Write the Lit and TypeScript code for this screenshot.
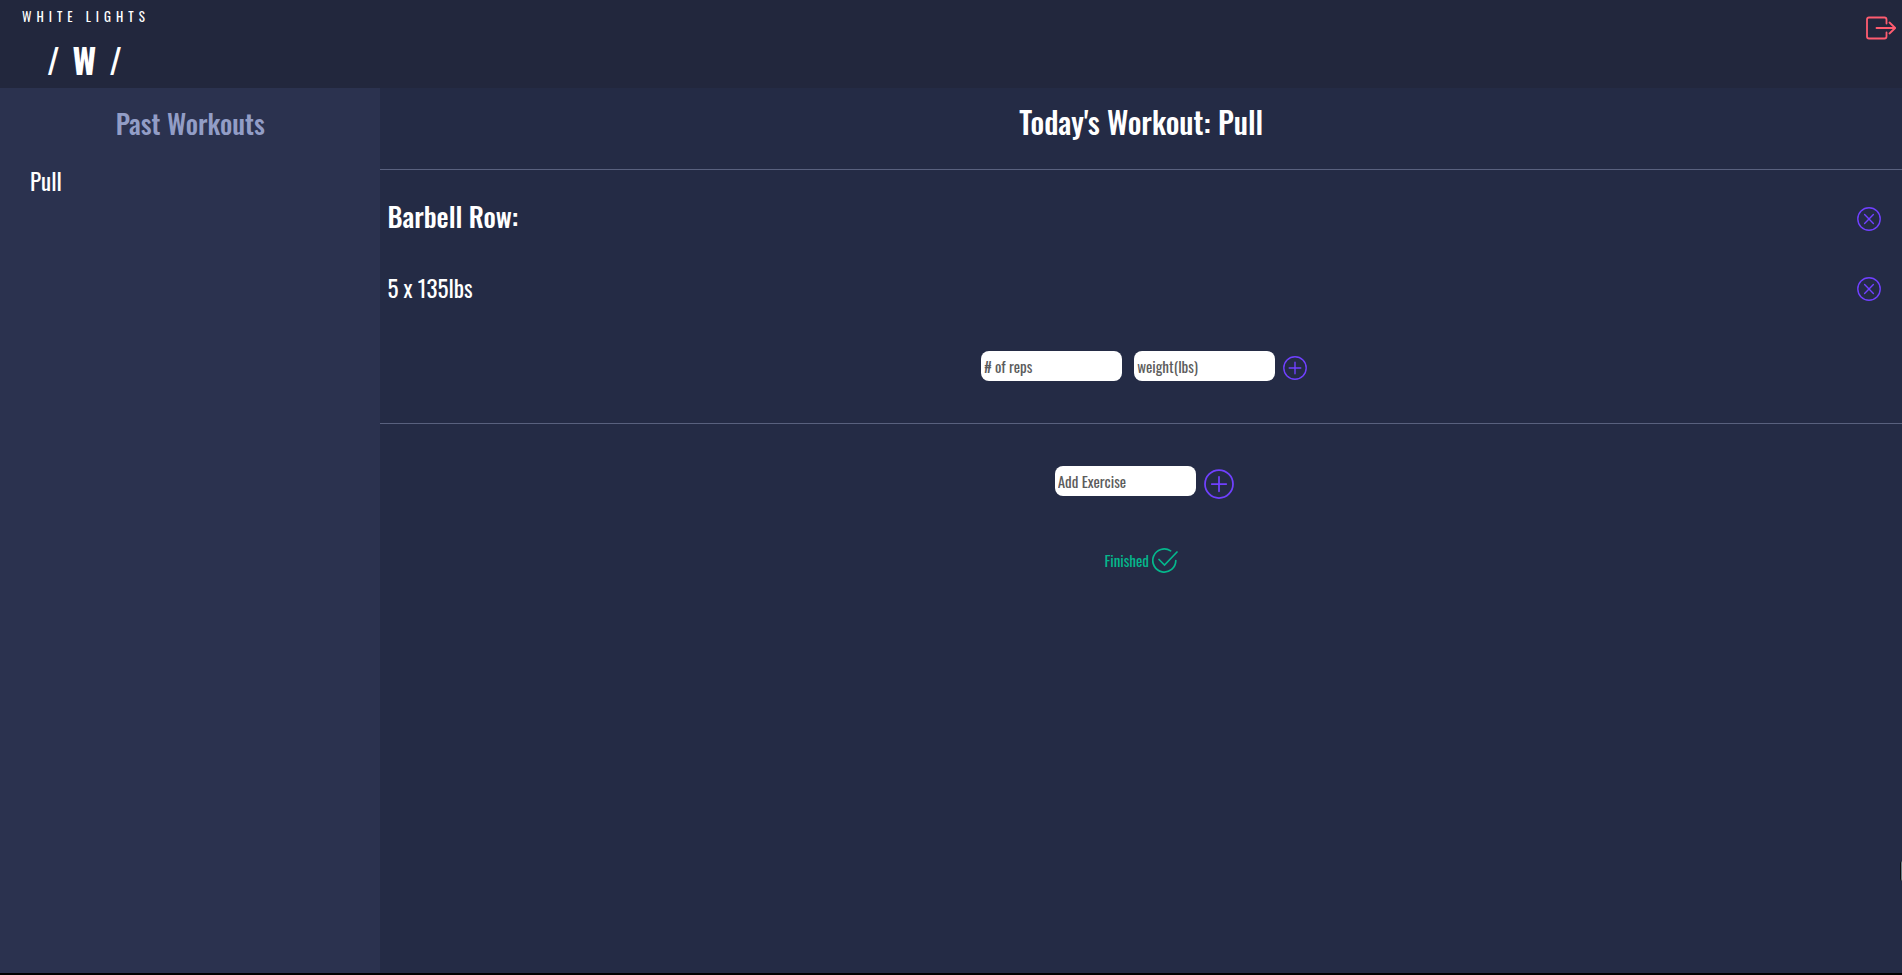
import { LitElement, html, css, svg } from "lit";
import { customElement, property, state } from "lit/decorators.js";

interface WorkoutSet {
  reps: string;
  weight: string;
}

interface Exercise {
  name: string;
  sets: WorkoutSet[];
}

@customElement("round-icon")
class RoundIcon extends LitElement {
  @property() kind = "add";

  static styles = css`
    :host {
      display: block;
    }
    svg {
      display: block;
      width: 100%;
      height: 100%;
      fill: none;
      stroke: currentColor;
      stroke-linecap: round;
      stroke-width: 1.4;
    }
  `;

  render() {
    return html`<svg viewBox="0 0 24 24" aria-hidden="true">
      <circle cx="12" cy="12" r="11.2"></circle>
      ${this.kind === "add"
        ? svg`<path d="M12 6.2v11.6M6.2 12h11.6"></path>`
        : svg`<path d="M7.6 7.6l8.8 8.8M16.4 7.6l-8.8 8.8"></path>`}
    </svg>`;
  }
}

@customElement("app-root")
class AppRoot extends LitElement {
  @state() private past = ["Pull"];
  @state() private exercises: Exercise[] = [
    { name: "Barbell Row", sets: [{ reps: "5", weight: "135" }] },
  ];

  static styles = css`
    :host {
      display: flex;
      flex-direction: column;
      box-sizing: border-box;
      min-height: 100vh;
      border-bottom: 2px solid #000;
      background: #242b45;
      color: #fff;
      font-family: Oswald, "Liberation Sans Narrow", "Liberation Sans", sans-serif;
      font-size: 15px;
      overflow: hidden;
    }
    * {
      box-sizing: border-box;
    }
    h1,
    h2,
    h3,
    p,
    ul {
      margin: 0;
      padding: 0;
    }
    button {
      border: 0;
      padding: 0;
      background: none;
      font: inherit;
      cursor: pointer;
    }
    .top {
      display: flex;
      justify-content: space-between;
      align-items: flex-start;
      height: 88px;
      padding: 4px 6px 0 22px;
      background: #22273d;
    }
    .name {
      font-size: 13px;
      line-height: 24px;
      letter-spacing: 5px;
    }
    .logo {
      display: flex;
      gap: 13px;
      padding: 10px 0 0 25px;
      font-size: 34px;
      line-height: 44px;
    }
    .logout {
      color: #ff5c70;
      margin-top: 12px;
    }
    .logout svg {
      display: block;
      width: 30px;
      height: 24px;
      fill: none;
      stroke: currentColor;
      stroke-width: 1.8;
      stroke-linecap: round;
      stroke-linejoin: round;
    }
    .body {
      flex: 1;
      display: grid;
      grid-template-columns: 20% 1fr;
    }
    .past {
      padding-top: 15px;
      background: #2b324f;
    }
    .past h2 {
      color: #929dc6;
      font-size: 27px;
      font-weight: 500;
      line-height: 40px;
      text-align: center;
    }
    .past ul {
      padding: 20px 30px;
      list-style: none;
      font-size: 23px;
      line-height: 36px;
    }
    .past a {
      color: inherit;
      text-decoration: none;
    }
    .today h1 {
      padding: 14px 0 27px;
      font-size: 30px;
      font-weight: 500;
      line-height: 40px;
      text-align: center;
    }
    .exercise {
      padding: 14px 0 42px;
      border: solid #59617e;
      border-width: 1px 0;
    }
    .row {
      display: flex;
      justify-content: space-between;
      align-items: center;
      height: 70px;
      padding: 0 21px 0 7px;
    }
    .row h3 {
      padding-bottom: 6px;
      font-size: 27px;
      font-weight: 500;
    }
    .row p {
      padding-bottom: 2px;
      font-size: 23px;
    }
    .row button {
      color: #7040ff;
    }
    .small {
      width: 24px;
      height: 24px;
    }
    .large {
      width: 30px;
      height: 30px;
    }
    form {
      display: flex;
      justify-content: center;
      align-items: center;
      padding-left: 6px;
    }
    .set {
      padding-top: 27px;
      gap: 12px;
    }
    .add {
      padding-top: 39px;
      gap: 8px;
    }
    .pair {
      display: flex;
      align-items: center;
      gap: 8px;
    }
    form button {
      color: #7040ff;
      margin-top: 4px;
    }
    .add button {
      margin-top: 6px;
    }
    input {
      width: 141px;
      height: 30px;
      padding: 0 3px;
      border: 0;
      border-radius: 8px;
      background: #fff;
      color: #222;
      font: inherit;
    }
    input::placeholder {
      color: #5c5c5c;
      opacity: 1;
    }
    .finish {
      display: flex;
      justify-content: center;
      padding-top: 47px;
    }
    .finish button {
      display: flex;
      align-items: center;
      gap: 3px;
      color: #05b78c;
    }
    .finish svg {
      width: 26px;
      height: 28px;
      padding-top: 2px;
      fill: none;
      stroke: currentColor;
      stroke-width: 1.7;
      stroke-linecap: round;
    }
    .help {
      position: absolute;
      right: 0;
      top: 861px;
      width: 2px;
      height: 20px;
      border-radius: 2px 0 0 2px;
      border-left: 1px solid #0b0d10;
      background: #6d7f86;
    }
  `;

  private removeExercise(i: number) {
    this.exercises = this.exercises.filter((_, n) => n !== i);
  }

  private removeSet(i: number, j: number) {
    this.exercises = this.exercises.map((e, n) =>
      n === i ? { ...e, sets: e.sets.filter((_, m) => m !== j) } : e
    );
  }

  private addSet(i: number, event: SubmitEvent) {
    event.preventDefault();
    const data = new FormData(event.target as HTMLFormElement);
    const set = { reps: String(data.get("reps")), weight: String(data.get("weight")) };
    this.exercises = this.exercises.map((e, n) =>
      n === i ? { ...e, sets: [...e.sets, set] } : e
    );
  }

  private addExercise(event: SubmitEvent) {
    event.preventDefault();
    const data = new FormData(event.target as HTMLFormElement);
    this.exercises = [...this.exercises, { name: String(data.get("exercise")), sets: [] }];
  }

  render() {
    return html`
      <header class="top">
        <div>
          <div class="name">WHITE LIGHTS</div>
          <div class="logo"><span>/</span><b>W</b><span>/</span></div>
        </div>
        <button class="logout" aria-label="Log out">
          <svg viewBox="0 0 30 24">
            <path d="M20.500 7.500V3.500Q20.500 1.500 18.500 1.500H3Q1 1.500 1 3.500v17Q1 22.500 3 22.500h15.500Q20.500 22.500 20.500 20.500V16.500"></path>
            <path d="M10.500 12H29.200M23.500 6.500L29.200 12l-5.700 5.500"></path>
          </svg>
        </button>
      </header>
      <div class="body">
        <aside class="past">
          <h2>Past Workouts</h2>
          <ul>
            ${this.past.map((w) => html`<li><a href="#">${w}</a></li>`)}
          </ul>
        </aside>
        <main class="today">
          <h1>Today's Workout: Pull</h1>
          ${this.exercises.map(
            (e, i) => html`<section class="exercise">
              <div class="row">
                <h3>${e.name}:</h3>
                <button aria-label="Remove exercise" @click=${() => this.removeExercise(i)}>
                  <round-icon class="small" kind="remove"></round-icon>
                </button>
              </div>
              ${e.sets.map(
                (s, j) => html`<div class="row">
                  <p>${s.reps} x ${s.weight}lbs</p>
                  <button aria-label="Remove set" @click=${() => this.removeSet(i, j)}>
                    <round-icon class="small" kind="remove"></round-icon>
                  </button>
                </div>`
              )}
              <form class="set" @submit=${(ev: SubmitEvent) => this.addSet(i, ev)}>
                <input name="reps" aria-label="Number of reps" placeholder="# of reps" />
                <div class="pair">
                  <input name="weight" aria-label="Weight in pounds" placeholder="weight(lbs)" />
                  <button aria-label="Add set"><round-icon class="small"></round-icon></button>
                </div>
              </form>
            </section>`
          )}
          <form class="add" @submit=${this.addExercise}>
            <input name="exercise" aria-label="Exercise name" placeholder="Add Exercise" />
            <button aria-label="Add exercise"><round-icon class="large"></round-icon></button>
          </form>
          <div class="finish">
            <button>
              Finished
              <svg viewBox="0 0 26 26" aria-hidden="true">
                <path d="M18.600 2.900A11.500 11.500 0 1 0 23.800 12.500"></path>
                <path d="M7 11.500l5.500 5.500L25 4"></path>
              </svg>
            </button>
          </div>
        </main>
      </div>
      <div class="help"></div>
    `;
  }
}
